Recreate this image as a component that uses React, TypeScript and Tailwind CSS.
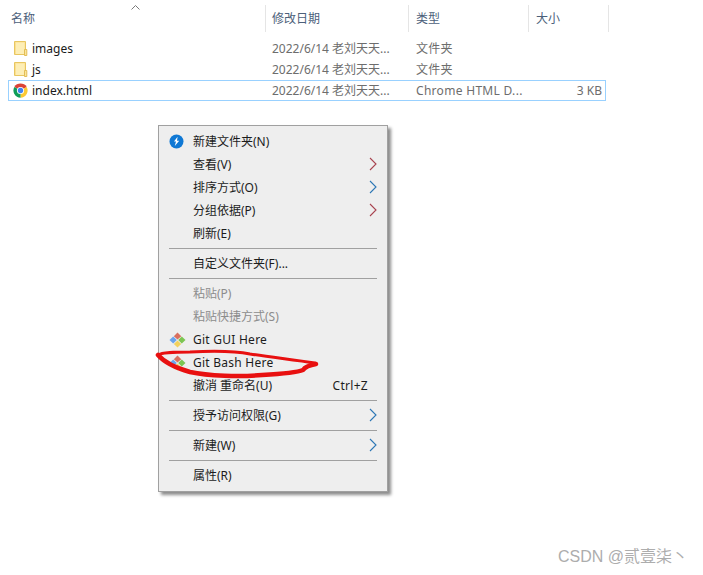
import React from 'react'

const fontStack = 'font-["Noto_Sans","Noto_Sans_CJK_SC",sans-serif]'

function FolderIcon() {
  return (
    <svg width="14" height="15" viewBox="0 0 14 15" className="shrink-0">
      <path d="M0.5 0.5H11.5V13.5H0.5Z" fill="#fce08f" stroke="#e8c660" />
      <path d="M2 1.5H10.5V9H12V13H2Z" fill="#fdeeb6" />
      <path d="M10.5 8.5H12.8V14.5H10.5Z" fill="#fbe59b" stroke="#e3bd55" />
    </svg>
  )
}

function ChromeIcon() {
  return (
    <svg width="15" height="15" viewBox="3 3 42 42" className="shrink-0">
      <path d="M24 24 L6.8 14 A20 20 0 0 1 41.3 14 Z" fill="#db4437" />
      <path d="M24 24 L41.3 14 A20 20 0 0 1 24 44 Z" fill="#fcc934" />
      <path d="M24 24 L24 44 A20 20 0 0 1 6.8 14 Z" fill="#0f9d58" />
      <circle cx="24" cy="24" r="10" fill="#fff" />
      <circle cx="24" cy="24" r="7.5" fill="#4285f4" />
    </svg>
  )
}

function NewFolderBadge() {
  return (
    <svg width="15" height="15" viewBox="0 0 15 15">
      <circle cx="7.5" cy="7.5" r="7" fill="#0f78d4" />
      <path d="M8.6 2.8 L5 7.6 H7 L5.8 12 L10.2 6.8 H8 Z" fill="#fff" />
    </svg>
  )
}

function GitIcon() {
  return (
    <svg width="17" height="16" viewBox="0 0 17 16">
      <path d="M8.5 0.5 L12.3 4.2 L8.5 7.6 L4.8 4.2 Z" fill="#d9705f" />
      <path d="M12.8 4.6 L16.5 8 L12.8 11.5 L9.2 8 Z" fill="#7cc552" />
      <path d="M8.5 8.5 L12.2 12 L8.5 15.5 L4.8 12 Z" fill="#f2d15f" />
      <path d="M4.2 4.6 L7.8 8 L4.2 11.5 L0.5 8 Z" fill="#6aa4ee" />
    </svg>
  )
}

function Chevron({ color }: { color: string }) {
  return (
    <svg width="8" height="14" viewBox="0 0 8 14" fill="none" className="-mt-[2px]">
      <path d="M1 1 L7 7 L1 13" stroke={color} strokeWidth="1.1" />
    </svg>
  )
}

function Separator() {
  return (
    <div className="flex h-[7px] items-center pl-[10px] pr-[10px]">
      <div className="h-px w-full bg-[#a0a0a0]" />
    </div>
  )
}

interface MenuRowProps {
  label: string
  icon?: React.ReactNode
  chevron?: string
  shortcut?: string
  disabled?: boolean
  wide?: boolean
}

function MenuRow({ label, icon, chevron, shortcut, disabled = false, wide = false }: MenuRowProps) {
  return (
    <div className={`flex h-[23px] items-center ${disabled ? 'text-[#8c8c8c]' : 'text-[#1c1c1c]'}`}>
      <div className="flex w-[33px] shrink-0 justify-start pl-[10px]">{icon}</div>
      <span className={`ml-[1px] flex-1 whitespace-nowrap ${wide ? 'tracking-[0.25px]' : ''}`}>{label}</span>
      {shortcut && <span className="mr-[19px] tracking-[0.3px]">{shortcut}</span>}
      {chevron && (
        <span className="mr-[10px] flex">
          <Chevron color={chevron} />
        </span>
      )}
    </div>
  )
}

const headers = [
  { label: '名称', width: 'w-[266px]', pad: 'pl-[11px]' },
  { label: '修改日期', width: 'w-[143px]', pad: 'pl-[6px]' },
  { label: '类型', width: 'w-[120px]', pad: 'pl-[7px]' },
  { label: '大小', width: 'w-[80px]', pad: 'pl-[7px]' },
]

function FileRow({ name, icon, type, size, selected = false }: {
  name: string
  icon: React.ReactNode
  type: string
  size?: string
  selected?: boolean
}) {
  return (
    <div
      className={`flex h-[21px] w-[598px] items-center border text-[#6d6d6d] ${
        selected ? 'border-[#99d1ff]' : 'border-transparent'
      }`}
    >
      <div className="flex w-[259px] shrink-0 items-center pl-[4px]">
        {icon}
        <span className="ml-[3px] text-[#1a1a1a]">{name}</span>
      </div>
      <span className="w-[144px] shrink-0 pl-[4px] whitespace-nowrap">2022/6/14 老刘天天...</span>
      <span className="w-[120px] shrink-0 pl-[4px] tracking-[0.3px] whitespace-nowrap">{type}</span>
      <span className="flex-1 pr-[3px] text-right">{size}</span>
    </div>
  )
}

export default function App() {
  return (
    <div className={`relative h-[575px] w-[703px] overflow-hidden bg-white text-[12px] ${fontStack}`}>
      {/* column headers */}
      <div className="relative flex h-[38px] pt-[5px] text-[#4c607a]">
        {headers.map((h) => (
          <div key={h.label} className={`${h.width} ${h.pad} flex h-[27px] shrink-0 items-center border-r border-[#e5e5e5]`}>
            {h.label}
          </div>
        ))}
        <svg width="9" height="5" viewBox="0 0 9 5" fill="none" className="absolute left-[131px] top-[5px]">
          <path d="M0.5 4.5 L4.5 0.5 L8.5 4.5" stroke="#7a7a7a" />
        </svg>
      </div>

      <div className="pl-[8px]">
        <FileRow name="images" icon={<span className="ml-[1px] mr-[1px] flex"><FolderIcon /></span>} type="文件夹" />
        <FileRow name="js" icon={<span className="ml-[1px] mr-[1px] flex"><FolderIcon /></span>} type="文件夹" />
        <FileRow name="index.html" icon={<span className="mr-[1px] flex"><ChromeIcon /></span>} type="Chrome HTML D..." size="3 KB" selected />
      </div>

      {/* context menu */}
      <div className="ml-[158px] mt-[24px] w-[230px] border border-[#a0a0a0] bg-[#eeeeee] pb-[4px] pt-[4px] shadow-[3px_3px_3px_rgba(0,0,0,0.45)]">
        <MenuRow label="新建文件夹(N)" icon={<NewFolderBadge />} />
        <MenuRow label="查看(V)" chevron="#a8434f" />
        <MenuRow label="排序方式(O)" chevron="#2d77b5" />
        <MenuRow label="分组依据(P)" chevron="#a8434f" />
        <MenuRow label="刷新(E)" />
        <Separator />
        <MenuRow label="自定义文件夹(F)..." />
        <Separator />
        <MenuRow label="粘贴(P)" disabled />
        <MenuRow label="粘贴快捷方式(S)" disabled />
        <MenuRow label="Git GUI Here" icon={<GitIcon />} wide />
        <MenuRow label="Git Bash Here" icon={<GitIcon />} wide />
        <MenuRow label="撤消 重命名(U)" shortcut="Ctrl+Z" />
        <Separator />
        <MenuRow label="授予访问权限(G)" chevron="#2d77b5" />
        <Separator />
        <MenuRow label="新建(W)" chevron="#2d77b5" />
        <Separator />
        <MenuRow label="属性(R)" />
      </div>

      {/* red marker scribble */}
      <svg width="703" height="575" viewBox="0 0 703 575" fill="none" className="pointer-events-none absolute left-0 top-0">
        <path
          d="M158 355 C162 352 175 352 190 352 C210 351 235 351 250 354 C270 357 295 360 315 363"
          stroke="#e81010"
          strokeWidth="3"
          strokeLinecap="round"
        />
        <path
          d="M158 355 C164 362 176 368 190 372 C208 376 240 377 262 375 C280 374 296 373 303 370 C305 367 310 365 316 364"
          stroke="#e81010"
          strokeWidth="4.5"
          strokeLinecap="round"
          strokeLinejoin="round"
        />
      </svg>

      {/* watermark */}
      <div className='absolute left-[558px] top-[546px] whitespace-nowrap font-["Liberation_Sans","Noto_Sans_CJK_SC",sans-serif] text-[16px] leading-[22px] text-[#adadad]'>
        CSDN @贰壹柒丶
      </div>
    </div>
  )
}
